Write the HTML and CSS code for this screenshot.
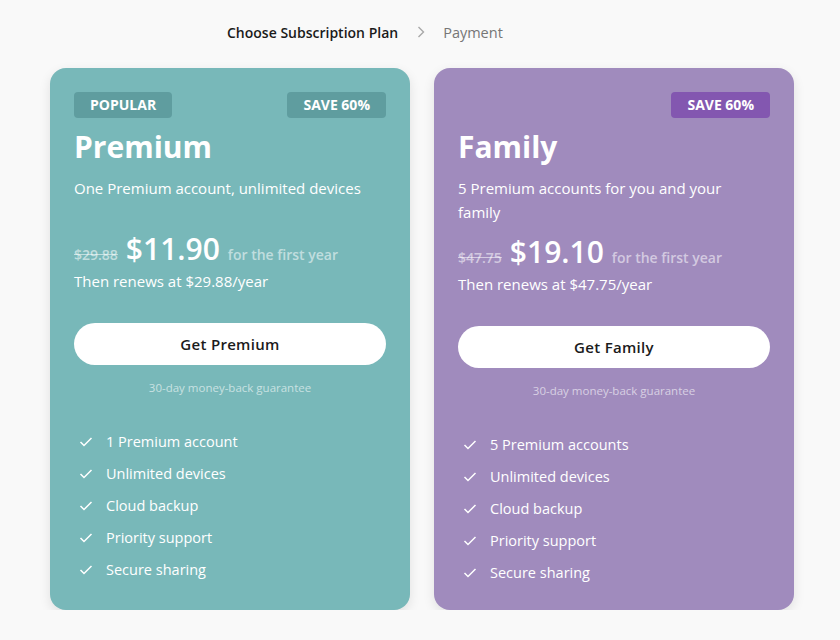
FILE: index.html
```html
<!DOCTYPE html>
<html lang="en">
<head>
<meta charset="utf-8">
<title>Choose Subscription Plan</title>
<link rel="stylesheet" href="styles.css">
</head>
<body>
<div class="page">
  <nav class="crumbs">
    <span class="crumb-current">Choose Subscription Plan</span>
    <svg class="crumb-sep" width="8" height="12" viewBox="0 0 8 12"><polyline points="1.5,1 6.5,6 1.5,11" fill="none" stroke="#a8a8a8" stroke-width="1.4"/></svg>
    <span class="crumb-next">Payment</span>
  </nav>
  <div class="plans">
    <section class="card card-teal">
      <div class="badges">
        <span class="badge">POPULAR</span>
        <span class="badge">SAVE 60%</span>
      </div>
      <h2 class="title">Premium</h2>
      <p class="desc">One Premium account, unlimited devices</p>
      <div class="price-row">
        <span class="old">$29.88</span>
        <span class="now">$11.90</span>
        <span class="period">for the first year</span>
      </div>
      <p class="renew">Then renews at $29.88/year</p>
      <button class="cta">Get Premium</button>
      <p class="guarantee">30-day money-back guarantee</p>
      <ul class="features">
        <li><svg class="check" width="24" height="24" viewBox="0 0 24 24"><polyline points="6.5,12 10,15.5 17.5,8" fill="none" stroke="#fff" stroke-width="1.5"/></svg>1 Premium account</li>
        <li><svg class="check" width="24" height="24" viewBox="0 0 24 24"><polyline points="6.5,12 10,15.5 17.5,8" fill="none" stroke="#fff" stroke-width="1.5"/></svg>Unlimited devices</li>
        <li><svg class="check" width="24" height="24" viewBox="0 0 24 24"><polyline points="6.5,12 10,15.5 17.5,8" fill="none" stroke="#fff" stroke-width="1.5"/></svg>Cloud backup</li>
        <li><svg class="check" width="24" height="24" viewBox="0 0 24 24"><polyline points="6.5,12 10,15.5 17.5,8" fill="none" stroke="#fff" stroke-width="1.5"/></svg>Priority support</li>
        <li><svg class="check" width="24" height="24" viewBox="0 0 24 24"><polyline points="6.5,12 10,15.5 17.5,8" fill="none" stroke="#fff" stroke-width="1.5"/></svg>Secure sharing</li>
      </ul>
    </section>
    <section class="card card-purple">
      <div class="badges badges-end">
        <span class="badge">SAVE 60%</span>
      </div>
      <h2 class="title">Family</h2>
      <p class="desc">5 Premium accounts for you and your family</p>
      <div class="price-row">
        <span class="old">$47.75</span>
        <span class="now">$19.10</span>
        <span class="period">for the first year</span>
      </div>
      <p class="renew">Then renews at $47.75/year</p>
      <button class="cta">Get Family</button>
      <p class="guarantee">30-day money-back guarantee</p>
      <ul class="features">
        <li><svg class="check" width="24" height="24" viewBox="0 0 24 24"><polyline points="6.5,12 10,15.5 17.5,8" fill="none" stroke="#fff" stroke-width="1.5"/></svg>5 Premium accounts</li>
        <li><svg class="check" width="24" height="24" viewBox="0 0 24 24"><polyline points="6.5,12 10,15.5 17.5,8" fill="none" stroke="#fff" stroke-width="1.5"/></svg>Unlimited devices</li>
        <li><svg class="check" width="24" height="24" viewBox="0 0 24 24"><polyline points="6.5,12 10,15.5 17.5,8" fill="none" stroke="#fff" stroke-width="1.5"/></svg>Cloud backup</li>
        <li><svg class="check" width="24" height="24" viewBox="0 0 24 24"><polyline points="6.5,12 10,15.5 17.5,8" fill="none" stroke="#fff" stroke-width="1.5"/></svg>Priority support</li>
        <li><svg class="check" width="24" height="24" viewBox="0 0 24 24"><polyline points="6.5,12 10,15.5 17.5,8" fill="none" stroke="#fff" stroke-width="1.5"/></svg>Secure sharing</li>
      </ul>
    </section>
  </div>
</div>
</body>
</html>
```
FILE: styles.css
```css
* { box-sizing: border-box; }
html, body { margin: 0; padding: 0; }
body {
  background: #f9f9f9;
  font-family: "Open Sans", "Noto Sans", sans-serif;
  color: #1b1b1b;
}
.page {
  padding: 20px 0 0 50px;
}
.crumbs {
  display: flex;
  align-items: center;
  height: 24px;
  padding-left: 177px;
  font-size: 14px;
  font-weight: 600;
}
.crumb-current { color: #1b1b1b; }
.crumb-sep { margin: 0 18px 0 19px; }
.crumb-next { color: #767676; font-weight: 500; font-size: 14.5px; }
.plans {
  display: flex;
  gap: 24px;
  margin-top: 24px;
}
.card {
  width: 360px;
  border-radius: 16px;
  padding: 24px 24px 25px;
  color: #fff;
  box-shadow: 0 4px 12px rgba(0,0,0,0.10);
  display: flex;
  flex-direction: column;
}
.card-teal { background: #78b8b9; }
.card-teal .badge { background: #5f9d9f; }
.card-purple { background: #a08bbd; }
.card-purple .badge { background: #8357b0; }
.badges {
  display: flex;
  justify-content: space-between;
}
.badges-end { justify-content: flex-end; }
.badge {
  height: 26px;
  line-height: 26px;
  padding: 0 16px;
  border-radius: 4px;
  font-size: 14px;
  font-weight: 700;
}
.title {
  margin: 10px 0 0;
  font-size: 30px;
  line-height: 38px;
  font-weight: 700;
}
.desc {
  margin: 10px 0 0;
  max-width: 296px;
  font-size: 15px;
  line-height: 24px;
  min-height: 45px;
}
.price-row {
  display: flex;
  align-items: baseline;
  gap: 8px;
  margin-top: 8px;
  height: 40px;
}
.old {
  font-size: 14px;
  line-height: 1;
  font-weight: 600;
  color: rgba(255,255,255,0.55);
  text-decoration: line-through;
}
.now {
  font-size: 30px;
  line-height: 40px;
  font-weight: 600;
}
.period {
  font-size: 14px;
  line-height: 1;
  font-weight: 600;
  color: rgba(255,255,255,0.55);
}
.renew {
  margin: 0;
  font-size: 15px;
  line-height: 24px;
}
.cta {
  margin-top: 30px;
  height: 42px;
  width: 100%;
  border: 0;
  border-radius: 21px;
  background: #fff;
  color: #1b1b1b;
  font-family: inherit;
  font-size: 15px;
  font-weight: 600;
  letter-spacing: 0.3px;
}
.guarantee {
  margin: 14px 0 0;
  text-align: center;
  font-size: 11.5px;
  line-height: 18px;
  color: rgba(255,255,255,0.6);
}
.features {
  list-style: none;
  margin: 33px 0 0;
  padding: 0;
  display: flex;
  flex-direction: column;
  gap: 8px;
}
.features li {
  display: flex;
  align-items: center;
  gap: 8px;
  font-size: 14.5px;
  line-height: 24px;
}
.check { flex: none; }
```
